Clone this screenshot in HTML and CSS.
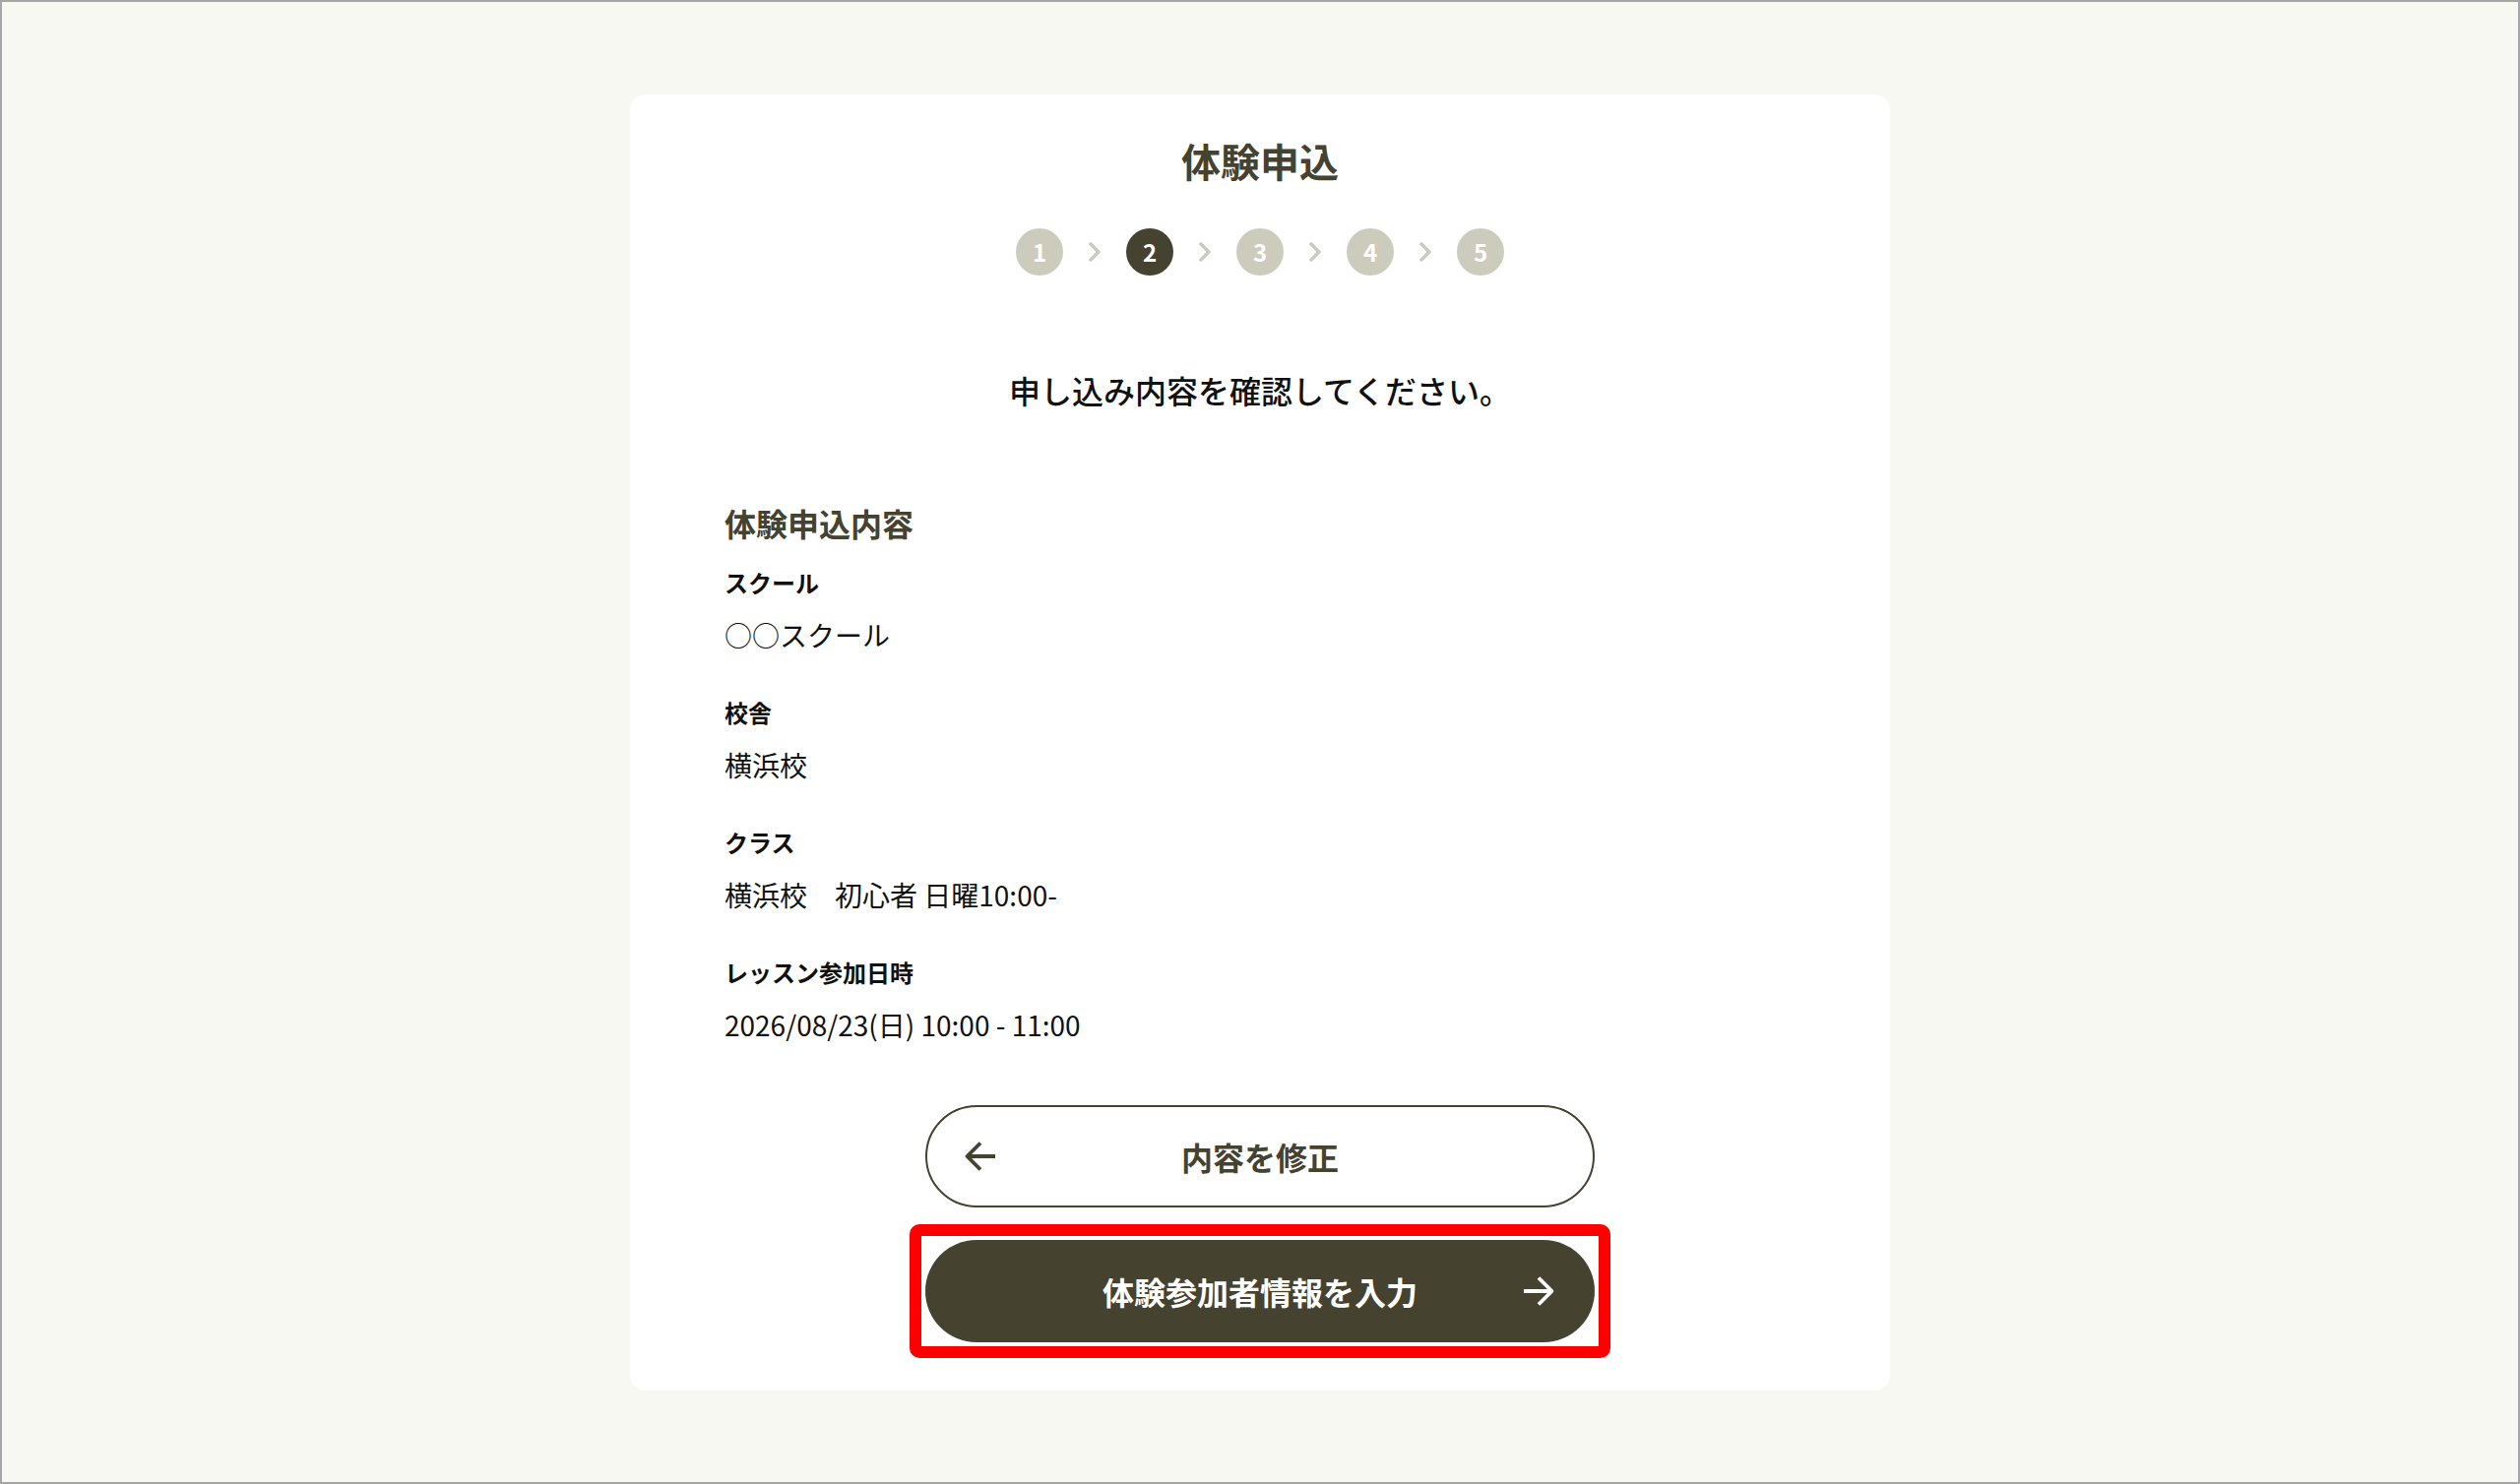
FILE: index.html
```html
<!DOCTYPE html>
<html lang="ja">
<head>
<meta charset="utf-8">
<title>体験申込</title>
<link rel="stylesheet" href="styles.css">
</head>
<body>
<div class="frame">
  <main class="card">
    <h1 class="title">体験申込</h1>
    <ol class="steps">
      <li class="step">1</li>
      <li class="chev"><svg viewBox="0 0 14 22" width="14" height="22"><path d="M3 3l8 8-8 8" fill="none" stroke="#cdcbbc" stroke-width="3.6" stroke-linecap="round" stroke-linejoin="round"/></svg></li>
      <li class="step is-active">2</li>
      <li class="chev"><svg viewBox="0 0 14 22" width="14" height="22"><path d="M3 3l8 8-8 8" fill="none" stroke="#cdcbbc" stroke-width="3.6" stroke-linecap="round" stroke-linejoin="round"/></svg></li>
      <li class="step">3</li>
      <li class="chev"><svg viewBox="0 0 14 22" width="14" height="22"><path d="M3 3l8 8-8 8" fill="none" stroke="#cdcbbc" stroke-width="3.6" stroke-linecap="round" stroke-linejoin="round"/></svg></li>
      <li class="step">4</li>
      <li class="chev"><svg viewBox="0 0 14 22" width="14" height="22"><path d="M3 3l8 8-8 8" fill="none" stroke="#cdcbbc" stroke-width="3.6" stroke-linecap="round" stroke-linejoin="round"/></svg></li>
      <li class="step">5</li>
    </ol>
    <p class="intro">申し込み内容を確認してください。</p>
    <section class="summary">
      <h2 class="summary-title">体験申込内容</h2>
      <dl class="details">
        <div class="item">
          <dt>スクール</dt>
          <dd>○○スクール</dd>
        </div>
        <div class="item">
          <dt>校舎</dt>
          <dd>横浜校</dd>
        </div>
        <div class="item">
          <dt>クラス</dt>
          <dd>横浜校　初心者 日曜10:00-</dd>
        </div>
        <div class="item">
          <dt>レッスン参加日時</dt>
          <dd>2026/08/23(日) 10:00 - 11:00</dd>
        </div>
      </dl>
    </section>
    <div class="actions">
      <button class="btn btn-outline" type="button">
        <svg class="icon" viewBox="0 0 32 32" width="32" height="32"><path d="M3 16H31M16 2.5L2.5 16 16 29.5" fill="none" stroke="#454230" stroke-width="3.8" stroke-linecap="butt" stroke-linejoin="round"/></svg>
        <span class="label">内容を修正</span>
        <span class="spacer"></span>
      </button>
      <div class="highlight">
        <button class="btn btn-solid" type="button">
          <span class="spacer"></span>
          <span class="label">体験参加者情報を入力</span>
          <svg class="icon" viewBox="0 0 32 32" width="32" height="32"><path d="M0 16H28M15 2.5L28.5 16 15 29.5" fill="none" stroke="#ffffff" stroke-width="3.8" stroke-linecap="butt" stroke-linejoin="round"/></svg>
        </button>
      </div>
    </div>
  </main>
</div>
</body>
</html>
```
FILE: styles.css
```css
* { box-sizing: border-box; }
html, body {
  margin: 0;
  padding: 0;
}
body {
  font-family: "Noto Sans CJK JP", "Noto Sans", sans-serif;
  color: #111;
  background: #f8f8f3;
}
.frame {
  width: 2560px;
  height: 1508px;
  border: 2px solid #a6a6a6;
  background: #f8f8f3;
  padding-top: 94px;
}
.card {
  width: 1280px;
  margin: 0 auto;
  background: #ffffff;
  border-radius: 16px;
  padding: 37px 96px 33px;
  display: flex;
  flex-direction: column;
}
.title {
  margin: 0;
  text-align: center;
  font-size: 40px;
  line-height: 60px;
  font-weight: 700;
  color: #454230;
}
.steps {
  list-style: none;
  margin: 39px 0 0;
  padding: 0;
  display: flex;
  justify-content: center;
  align-items: center;
  gap: 25px;
}
.step {
  width: 48px;
  height: 48px;
  border-radius: 50%;
  background: #cdcbbc;
  color: #fff;
  font-size: 24px;
  font-weight: 700;
  display: flex;
  align-items: center;
  justify-content: center;
  line-height: 1;
}
.step.is-active { background: #454230; }
.chev { display: flex; align-items: center; }
.chev svg { display: block; }
.intro {
  margin: 92px 0 0;
  text-align: center;
  font-size: 32px;
  line-height: 48px;
  font-weight: 500;
  color: #111;
}
.summary { margin-top: 87px; }
.summary-title {
  margin: 0;
  font-size: 32px;
  line-height: 48px;
  font-weight: 700;
  color: #454230;
}
.details {
  margin: 19px 0 0;
  display: flex;
  flex-direction: column;
  gap: 40px;
}
.item dt {
  font-size: 24px;
  line-height: 36px;
  font-weight: 700;
  color: #111;
}
.item dd {
  margin: 14px 0 0;
  font-size: 28px;
  line-height: 42px;
  color: #111;
}
.actions {
  margin-top: 61px;
  display: flex;
  flex-direction: column;
  align-items: center;
  gap: 17px;
}
.btn {
  width: 680px;
  height: 104px;
  border-radius: 52px;
  font-family: inherit;
  font-size: 32px;
  font-weight: 700;
  display: grid;
  grid-template-columns: 32px 1fr 32px;
  align-items: center;
  padding: 0 40px;
  cursor: pointer;
}
.btn .label { text-align: center; line-height: 48px; }
.btn .icon { display: block; }
.btn-outline {
  background: #fff;
  border: 2px solid #454230;
  color: #454230;
  padding: 0 38px;
}
.btn-solid {
  background: #454230;
  border: 0;
  color: #fff;
}
.highlight {
  border: 12px solid #ff0000;
  border-radius: 10px;
  padding: 4px;
  background: #fff;
}
```
